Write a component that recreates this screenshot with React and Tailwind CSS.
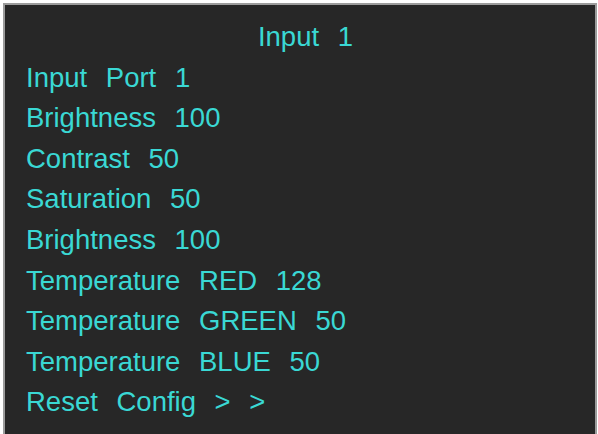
const rows = [
  "Input Port 1",
  "Brightness 100",
  "Contrast 50",
  "Saturation 50",
  "Brightness 100",
  "Temperature RED 128",
  "Temperature GREEN 50",
  "Temperature BLUE 50",
  "Reset Config > >",
];

export default function App() {
  return (
    <div className="h-[434px] w-[598px] bg-white pl-[3px] pr-[1px] pt-[3px]">
      <div
        className="flex h-full flex-col border-x-2 border-t-2 border-[#9c9c9c] bg-[#272727] pl-[21px] pt-[12px] text-[27.5px] leading-[40.6px] text-[#3ad8d4] [word-spacing:11px]"
        style={{ fontFamily: '"Liberation Sans", Arial, sans-serif' }}
      >
        <div className="pr-[10px] text-center">Input 1</div>
        {rows.map((row, i) => (
          <div key={i}>{row}</div>
        ))}
      </div>
    </div>
  );
}
